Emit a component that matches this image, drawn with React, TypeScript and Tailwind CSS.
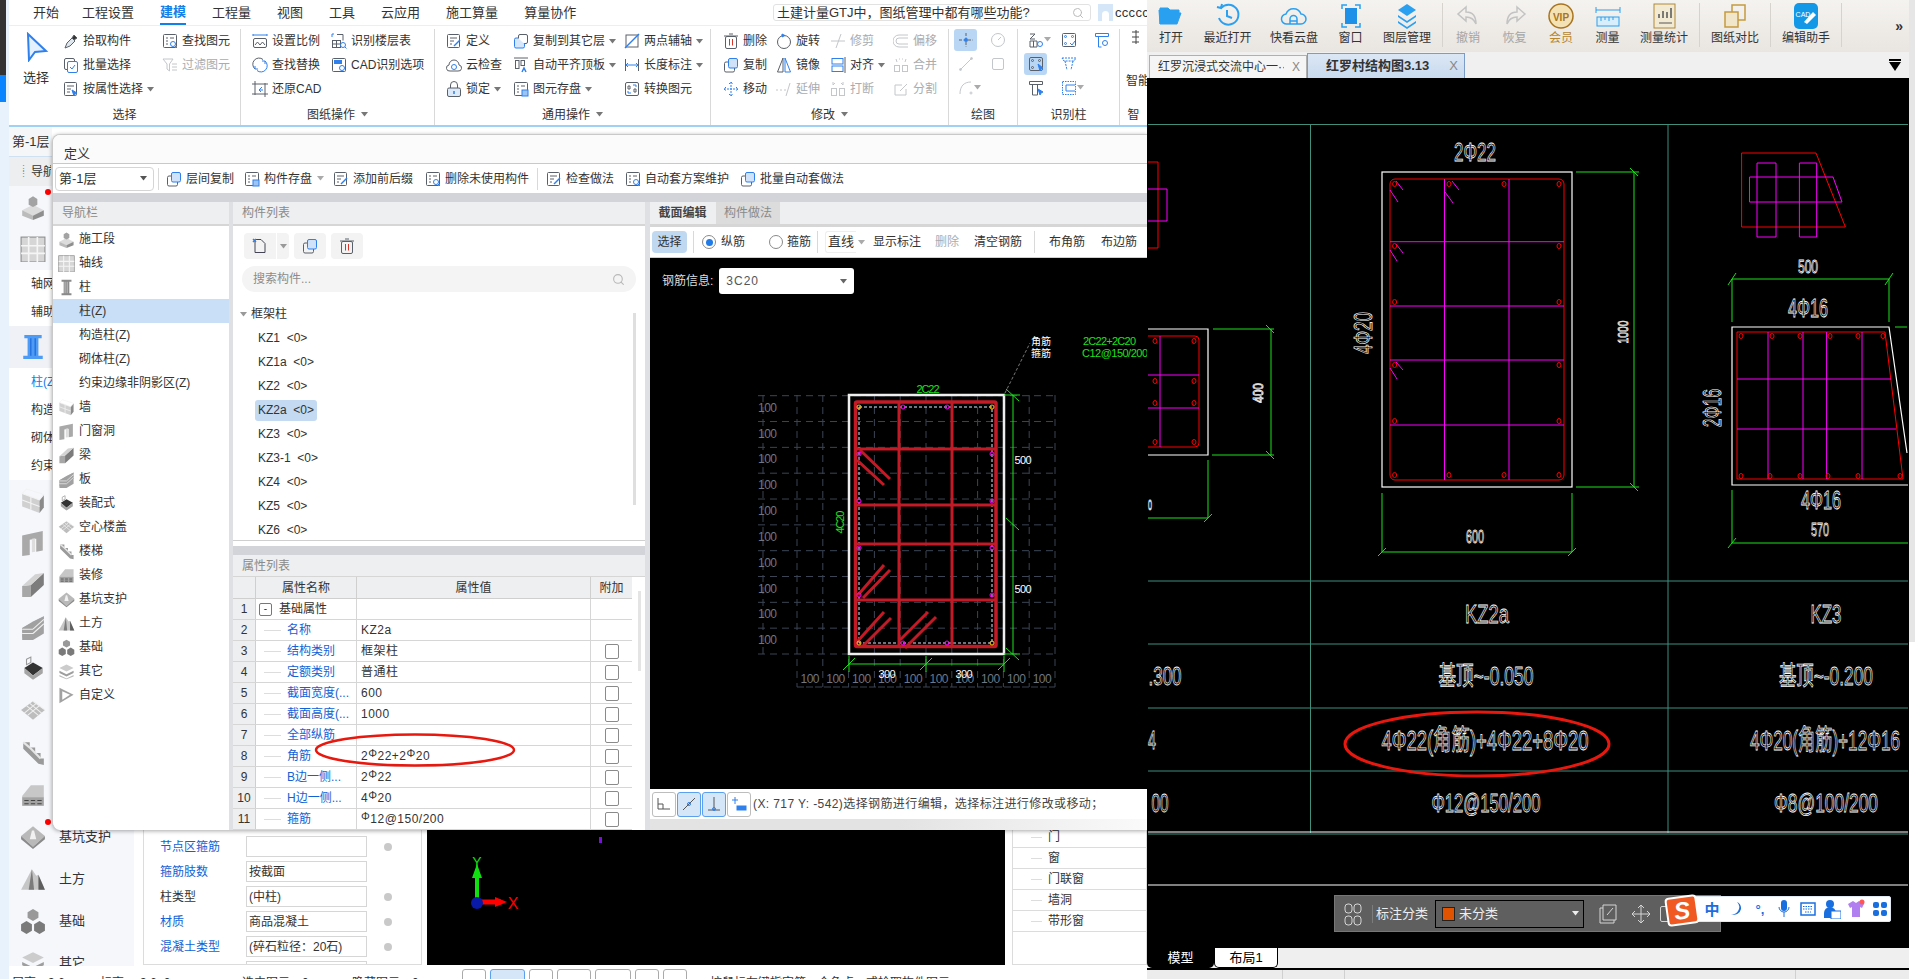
import type { ReactNode } from "react";
import { Search } from "lucide-react";

const BLUE = "#2f80ed";
const DK = "#5a6069";
const LT = "#c3c6ca";

const Ic = ({ c = DK, s = 16, children }: { c?: string; s?: number; children: ReactNode }) => (
  <svg width={s} height={s} viewBox="0 0 16 16" fill="none" stroke={c} strokeWidth={1} className="shrink-0">
    {children}
  </svg>
);

const Tri = ({ c = "#777" }: { c?: string }) => (
  <svg width="7" height="5" viewBox="0 0 7 5" className="shrink-0">
    <polygon points="0,0 7,0 3.5,4.5" fill={c} />
  </svg>
);

// ribbon icons
const ribbon: Record<string, ReactNode> = {
  pick: (
    <Ic>
      <path d="M2 15l2-5 5-5 3 3-5 5z" fill="#dfe6ee" />
      <path d="M9 5l2-3 3 3-3 2z" fill="#333" />
    </Ic>
  ),
  batch: (
    <Ic>
      <rect x="1.5" y="1.5" width="10" height="11" rx="1.5" />
      <rect x="4.5" y="4.5" width="10" height="11" rx="1.5" stroke={BLUE} fill="#fff" />
      <path d="M7 10l2 2 3-4" stroke={BLUE} />
    </Ic>
  ),
  attr: (
    <Ic>
      <rect x="1.5" y="1.5" width="12" height="13" rx="1" />
      <path d="M4 5h7M4 8h4M4 11h3" />
      <path d="M9 9l5 3-2 1-1 2z" fill={BLUE} stroke={BLUE} />
    </Ic>
  ),
  find: (
    <Ic>
      <rect x="1.5" y="1.5" width="13" height="13" rx="1" />
      <path d="M4 5h2M8 5h4M4 8h2M4 11h2" />
      <circle cx="11" cy="11" r="2.5" stroke={BLUE} />
      <path d="M13 13l2 2" stroke={BLUE} />
    </Ic>
  ),
  filter: (
    <Ic c={LT}>
      <path d="M1 2h10L7.5 7v7L5 12V7z" />
      <path d="M10 7h5M10 10h5M10 13h5" />
    </Ic>
  ),
  scale: (
    <Ic>
      <path d="M1 2h14M1 1v2M15 1v2" stroke={BLUE} />
      <rect x="1.5" y="5.5" width="13" height="9" rx="1.5" />
      <path d="M3 12l2.5-3 2.5 3 2.5-3 2.5 3" />
    </Ic>
  ),
  replace: (
    <Ic>
      <path d="M11 2.5A6 6 0 0 0 3 12" stroke={DK} />
      <path d="M5 13.5A6 6 0 0 0 13 4" stroke={BLUE} />
      <path d="M3 9v3h3M13 7V4h-3" stroke={BLUE} />
    </Ic>
  ),
  restore: (
    <Ic>
      <path d="M3 0v14M13 2v14M0 3h16M0 13h16" />
      <path d="M10 6L7 9h4M7 9l2 2" stroke={BLUE} />
    </Ic>
  ),
  floor: (
    <Ic>
      <path d="M1 1v3M1 1h2" stroke={BLUE} />
      <rect x="1.5" y="7.5" width="8" height="7" />
      <path d="M5.5 7.5v7M1.5 11h8M6 1.5h6v6" />
      <circle cx="12" cy="12" r="2.5" stroke={BLUE} />
      <path d="M14 14l1.500 1.500" stroke={BLUE} />
    </Ic>
  ),
  cadopt: (
    <Ic>
      <rect x="1.5" y="1.5" width="13" height="13" rx="1" />
      <rect x="3" y="3" width="8" height="4" fill={BLUE} stroke="none" />
      <circle cx="11" cy="11" r="2.5" stroke={BLUE} />
    </Ic>
  ),
  define: (
    <Ic>
      <rect x="1.5" y="1.5" width="12" height="13" rx="1" />
      <path d="M4 5h7M4 8h4M4 11h2" />
      <path d="M8 13l6-6" stroke={BLUE} strokeWidth={1.500} />
    </Ic>
  ),
  copyf: (
    <Ic>
      <rect x="5.500" y="1.500" width="9" height="9" rx="1.500" fill="#fff" />
      <path d="M5 5H3a1.500 1.500 0 0 0-1.500 1.500v7A1.500 1.500 0 0 0 3 15h7a1.500 1.500 0 0 0 1.500-1.500V11" stroke={BLUE} fill="#d7e7fb" />
    </Ic>
  ),
  cloud: (
    <Ic>
      <path d="M4 14a3 3 0 0 1-1-6 5 5 0 0 1 10 0 3 3 0 0 1-1 6z" />
      <circle cx="8" cy="10" r="2.500" stroke={BLUE} />
    </Ic>
  ),
  level: (
    <Ic>
      <path d="M1 1h14" />
      <rect x="2.500" y="3.500" width="3.500" height="8" />
      <rect x="8" y="3.500" width="3.500" height="5" />
      <path d="M9 15l2-4 2 4" stroke={BLUE} strokeWidth={1.500} />
    </Ic>
  ),
  lock: (
    <Ic>
      <rect x="1.500" y="7" width="13" height="8.500" rx="1.500" fill="#dbe9f9" stroke={DK} />
      <path d="M4.500 7V4a3.500 3.500 0 0 1 7 0v3" />
      <path d="M8 10v3" stroke={BLUE} strokeWidth={1.500} />
    </Ic>
  ),
  save: (
    <Ic>
      <rect x="1.500" y="1.500" width="13" height="13" rx="1" />
      <path d="M4 5h2M8 5h4M4 8h2M4 11h2" />
      <rect x="9" y="9" width="6" height="6" fill="#9cc4f4" stroke={BLUE} />
    </Ic>
  ),
  axis: (
    <Ic>
      <rect x="2" y="2" width="12" height="12" />
      <path d="M1 15L15 1" stroke={BLUE} strokeWidth={1.500} />
    </Ic>
  ),
  dim: (
    <Ic>
      <path d="M1.500 2v12M14.500 2v12" />
      <path d="M2 8h12M4 6L2 8l2 2M12 6l2 2-2 2" stroke={BLUE} />
    </Ic>
  ),
  conv: (
    <Ic>
      <rect x="1.500" y="1.500" width="13" height="13" rx="1.500" />
      <path d="M4 5h2v3H4zM10 8h2v3h-2z" />
      <path d="M9 4h3v2M7 12H4v-2" stroke={BLUE} />
    </Ic>
  ),
  del: (
    <Ic>
      <rect x="2.500" y="3.500" width="11" height="12" rx="1.500" />
      <path d="M1 3h14M6 1h4" />
      <path d="M6.500 6v6.500M9.500 6v6.500" stroke="#d8342c" />
    </Ic>
  ),
  dup: (
    <Ic>
      <path d="M5 5H3a1.500 1.500 0 0 0-1.500 1.500v7A1.500 1.500 0 0 0 3 15h7a1.500 1.500 0 0 0 1.500-1.500V11" />
      <rect x="5.500" y="1.500" width="9" height="9.500" rx="1.500" fill="#cfe2fa" stroke={BLUE} />
    </Ic>
  ),
  move: (
    <Ic c={BLUE}>
      <path d="M8 1v14M1 8h14M6 3l2-2 2 2M6 13l2 2 2-2M3 6L1 8l2 2M13 6l2 2-2 2" strokeDasharray="2 1" />
    </Ic>
  ),
  rot: (
    <Ic>
      <circle cx="8" cy="9" r="6.500" />
      <path d="M6 1l3 1.500-3 1.500z" fill={BLUE} stroke={BLUE} />
    </Ic>
  ),
  mir: (
    <Ic>
      <path d="M7 1L1.500 15H7z" />
      <path d="M9 1l5.500 14H9z" stroke={BLUE} />
    </Ic>
  ),
  trim: (
    <Ic c={LT}>
      <path d="M1 8h14M6 15l5-14" />
    </Ic>
  ),
  ext: (
    <Ic c={LT}>
      <path d="M0 9h2M4 9h2M8 9h2M10 15l4-13" />
    </Ic>
  ),
  offs: (
    <Ic c={LT}>
      <path d="M15 2H6a6 6 0 0 0 0 12h9M15 5H6a3 3 0 0 0 0 6h9" />
    </Ic>
  ),
  align: (
    <Ic c={BLUE}>
      <rect x="2" y="1.500" width="11" height="5.500" />
      <rect x="2" y="9" width="11" height="5.500" />
      <path d="M15 0v16" stroke={DK} />
    </Ic>
  ),
  brk: (
    <Ic c={LT}>
      <rect x="1.500" y="7.500" width="5" height="7" />
      <rect x="9.500" y="7.500" width="5" height="7" />
      <path d="M3 1v3M5 2L3 4M13 1v3M11 2l2 2" />
    </Ic>
  ),
  merge: (
    <Ic c={LT}>
      <rect x="1.500" y="8.500" width="5" height="6" />
      <rect x="9.500" y="8.500" width="5" height="6" />
      <path d="M3 2l1 3M13 2l-1 3M6 2h1M9 2h1" />
    </Ic>
  ),
  split: (
    <Ic c={LT}>
      <path d="M9 4H2v10h11V8" />
      <path d="M7 10l7-7" />
    </Ic>
  ),
};

const Item = ({ icon, text, off, arrow }: { icon: string; text: string; off?: boolean; arrow?: boolean }) => (
  <div className={`flex items-center h-[24px] gap-[4px] whitespace-nowrap ${off ? "text-[#a9acb0]" : "text-[#333]"}`}>
    {ribbon[icon]}
    <span>{text}</span>
    {arrow && <Tri />}
  </div>
);

const Group = ({ className, label, arrow, children }: { className: string; label?: string; arrow?: boolean; children: ReactNode }) => (
  <div className={`flex flex-col h-[96px] shrink-0 border-r border-[#d9d9d9] ${className}`}>
    <div className="flex h-[75px] overflow-hidden">{children}</div>
    <div className="flex items-center justify-center gap-[6px] h-[21px] text-[#333] whitespace-nowrap">
      {label}
      {arrow && <Tri />}
    </div>
  </div>
);

const Cell = ({ on, tri, children }: { on?: boolean; tri?: boolean; children: ReactNode }) => (
  <div className={`relative flex items-center justify-center w-[23px] h-[22px] rounded-[3px] mb-[2px] ${on ? "bg-[#b9d7f5]" : ""}`}>
    {children}
    {tri && (
      <span className="absolute left-[20px] top-[8px]">
        <Tri c="#aaa" />
      </span>
    )}
  </div>
);

const Ribbon = () => (
  <div className="flex h-[101px] pt-[3px] border-b-2 border-[#9fd0f5] text-[12px]">
    <Group className="w-[232px]" label="选择">
      <div className="w-[54px] pl-[14px] flex flex-col items-start shrink-0">
        <svg width="24" height="30" viewBox="0 0 24 30" className="ml-[2px] mt-[3px]">
          <path d="M3 2l18 17-11 1-6 8z" fill="#e3f0fd" stroke="#2f80ed" strokeWidth="2" />
        </svg>
        <span className="mt-[6px] text-[13px]">选择</span>
      </div>
      <div className="w-[99px] shrink-0">
        <Item icon="pick" text="拾取构件" />
        <Item icon="batch" text="批量选择" />
        <Item icon="attr" text="按属性选择" arrow />
      </div>
      <div>
        <Item icon="find" text="查找图元" />
        <Item icon="filter" text="过滤图元" off />
      </div>
    </Group>
    <Group className="w-[194px]" label="图纸操作" arrow>
      <div className="w-[79px] ml-[11px] shrink-0">
        <Item icon="scale" text="设置比例" />
        <Item icon="replace" text="查找替换" />
        <Item icon="restore" text="还原CAD" />
      </div>
      <div>
        <Item icon="floor" text="识别楼层表" />
        <Item icon="cadopt" text="CAD识别选项" />
      </div>
    </Group>
    <Group className="w-[276px]" label="通用操作" arrow>
      <div className="w-[67px] ml-[11px] shrink-0">
        <Item icon="define" text="定义" />
        <Item icon="cloud" text="云检查" />
        <Item icon="lock" text="锁定" arrow />
      </div>
      <div className="w-[111px] shrink-0">
        <Item icon="copyf" text="复制到其它层" arrow />
        <Item icon="level" text="自动平齐顶板" arrow />
        <Item icon="save" text="图元存盘" arrow />
      </div>
      <div>
        <Item icon="axis" text="两点辅轴" arrow />
        <Item icon="dim" text="长度标注" arrow />
        <Item icon="conv" text="转换图元" />
      </div>
    </Group>
    <Group className="w-[238px]" label="修改" arrow>
      <div className="w-[53px] ml-[12px] shrink-0">
        <Item icon="del" text="删除" />
        <Item icon="dup" text="复制" />
        <Item icon="move" text="移动" />
      </div>
      <div className="w-[54px] shrink-0">
        <Item icon="rot" text="旋转" />
        <Item icon="mir" text="镜像" />
        <Item icon="ext" text="延伸" off />
      </div>
      <div className="w-[63px] shrink-0">
        <Item icon="trim" text="修剪" off />
        <Item icon="align" text="对齐" arrow />
        <Item icon="brk" text="打断" off />
      </div>
      <div>
        <Item icon="offs" text="偏移" off />
        <Item icon="merge" text="合并" off />
        <Item icon="split" text="分割" off />
      </div>
    </Group>
    <Group className="w-[69px]" label="绘图">
      <div className="ml-[5px] mr-[9px] w-[23px]">
        <Cell on>
          <Ic c={DK}>
            <path d="M8 1v14M1 8h14" strokeDasharray="3 1.500" />
            <circle cx="8" cy="8" r="2" fill={BLUE} stroke="none" />
          </Ic>
        </Cell>
        <Cell>
          <Ic c={LT}>
            <path d="M2 14L14 2" />
            <circle cx="2.500" cy="13.500" r="1" />
            <circle cx="13.500" cy="2.500" r="1" />
          </Ic>
        </Cell>
        <Cell tri>
          <Ic c={LT}>
            <path d="M2 14C2 6 6 2 13 2" />
            <circle cx="13" cy="13" r="1" />
          </Ic>
        </Cell>
      </div>
      <div className="w-[23px]">
        <Cell>
          <Ic c={LT}>
            <circle cx="8" cy="8" r="6.500" />
            <path d="M8 8l3-3" />
          </Ic>
        </Cell>
        <Cell>
          <Ic c={LT}>
            <rect x="2.500" y="2.500" width="11" height="11" rx="1.500" />
          </Ic>
        </Cell>
      </div>
    </Group>
    <Group className="w-[102px]" label="识别柱">
      <div className="ml-[6px] mr-[10px] w-[23px]">
        <Cell tri>
          <Ic>
            <path d="M2 2h5M7 2L2 7h5M2 9h7v6H2zM5.500 9v6" />
            <circle cx="12" cy="12" r="2.500" stroke={BLUE} />
          </Ic>
        </Cell>
        <Cell on>
          <Ic>
            <rect x="1.500" y="1.500" width="13" height="13" rx="1.500" />
            <circle cx="4.500" cy="4.500" r="1" />
            <circle cx="11.500" cy="4.500" r="1" />
            <circle cx="4.500" cy="11.500" r="1" />
            <path d="M10 8l5 4-2 .5-1 2.500z" fill={BLUE} stroke={BLUE} />
          </Ic>
        </Cell>
        <Cell>
          <Ic>
            <path d="M1.500 1.500h13v3h-13zM4.500 5v10h5V5" />
            <path d="M10 9l5 3-2 1-1 2z" fill={BLUE} stroke={BLUE} />
          </Ic>
        </Cell>
      </div>
      <div className="mr-[10px] w-[23px]">
        <Cell>
          <Ic>
            <rect x="1.500" y="1.500" width="13" height="13" rx="1" />
            <circle cx="4.500" cy="4.500" r="1" stroke={BLUE} />
            <circle cx="11.500" cy="4.500" r="1" stroke={BLUE} />
            <circle cx="4.500" cy="11.500" r="1" stroke={BLUE} />
            <path d="M9 11l2 2 3-4" stroke={BLUE} />
          </Ic>
        </Cell>
        <Cell>
          <Ic c={BLUE}>
            <path d="M1 2h14l-2 3H3zM4 5l2 9M12 5l-2 9" strokeDasharray="2 1" />
          </Ic>
        </Cell>
        <Cell tri>
          <Ic c={BLUE}>
            <rect x="1.500" y="1.500" width="13" height="13" strokeDasharray="1.500 1" />
            <path d="M14 5H5v6h9" />
          </Ic>
        </Cell>
      </div>
      <div className="w-[23px]">
        <Cell>
          <Ic c={BLUE}>
            <path d="M1.500 1.500h13v3h-13zM4.500 5v10h3" />
            <circle cx="11" cy="11" r="2.500" />
          </Ic>
        </Cell>
      </div>
    </Group>
    <Group className="w-[27px] border-r-0" label="智">
      <div className="pl-[7px] flex flex-col text-[12px] whitespace-nowrap">
        <Ic c="#444">
          <path d="M9 1v14M5 3h7M5 8h7M5 13h7" />
        </Ic>
        <span className="mt-[27px] -ml-[1px]">智能</span>
      </div>
    </Group>
  </div>
);

// isometric gray block icons, nav panel and side rail share them
const iso: Record<string, ReactNode> = {
  block: (
    <>
      <path d="M12 10l10 5-10 6-10-6z" fill="#dcdcdc" />
      <path d="M2 15v5l10 4v-4z" fill="#bbb" />
      <path d="M22 15v5l-10 4v-4z" fill="#8f8f8f" />
      <path d="M12 2l4 2.500-4 2.500-4-2.500zM8 4.500V10l4 2V7zM16 4.500V10l-4 2V7z" fill="#a3a3a3" />
    </>
  ),
  grid: (
    <>
      <rect x="1" y="1" width="22" height="23" fill="#d6d6d6" stroke="#8d8d8d" />
      <path d="M8 1v23M16 1v23M1 9h22M1 16h22" stroke="#f5f5f5" strokeWidth="1.500" />
    </>
  ),
  column: (
    <>
      <path d="M5 1h14v3h-3v16h3v3H5v-3h3V4H5z" fill="#8a8a8a" />
      <path d="M10 4v16M13 4v16" stroke="#d5d5d5" />
    </>
  ),
  columnb: (
    <>
      <path d="M4 1h16v3h-3v16h4v3H3v-3h4V4H4z" fill="#4d9bf4" />
      <path d="M10 4v16M14 4v16" stroke="#1565d8" />
    </>
  ),
  wall: (
    <>
      <path d="M2 5l16 6v12L2 17z" fill="#d0d0d0" />
      <path d="M18 11l4-5v12l-4 5z" fill="#8a8a8a" />
      <path d="M2 5l4-4 16 5-4 5zM2 11l16 6M10 8v12" fill="none" stroke="#f3f3f3" />
    </>
  ),
  door: (
    <>
      <path d="M2 5l19-4v18l-6 1V8l-6 1v14l-7 1z" fill="#a9a9a9" />
      <path d="M11 8l3-.5V20l-3 .5z" fill="#ddd" />
    </>
  ),
  beam: (
    <>
      <path d="M2 13l8-1v11l-8 0z" fill="#a7a7a7" />
      <path d="M10 12L22 1v11L10 23z" fill="#7c7c7c" />
      <path d="M2 13L14 2l8-1-12 11z" fill="#d3d3d3" />
    </>
  ),
  slab: (
    <>
      <path d="M2 13l20-11v4L2 17zM2 18l20-11v4L2 22z" fill="#b3b3b3" />
      <path d="M2 13l10-6 10-5v16L12 24H2z" fill="#a1a1a1" />
      <path d="M2 14h10M2 18h10M12 14l10-9M12 18l10-9" stroke="#eee" />
    </>
  ),
  prefab: (
    <>
      <path d="M4 11l8-5 9 5-9 7z" fill="#333" />
      <path d="M4 11v5l8 6 9-6v-5l-9 7z" fill="#a5a5a5" />
      <path d="M6 3l4-2v5L6 8z" fill="none" stroke="#999" />
    </>
  ),
  hollow: (
    <>
      <path d="M12 3l11 8-11 9-11-9z" fill="#bdbdbd" />
      <path d="M6 7l11 9M9 5l11 9M12 3l11 8M18 7L7 16M15 5L4 14" stroke="#efefef" />
    </>
  ),
  stair: (
    <>
      <path d="M3 2h6v5h5v5h5v5h3v6l-5-1-14-14z" fill="#9a9a9a" />
      <path d="M3 2l6 5M9 7l5 5M14 12l5 5" stroke="#e5e5e5" strokeWidth="2" />
    </>
  ),
  finish: (
    <>
      <path d="M2 13L10 3h12v11H2z" fill="#c7c7c7" />
      <path d="M2 14h20v8H2z" fill="#a2a2a2" />
      <path d="M4 17h4M10 17h4M16 17h4M4 20h4M10 20h4M16 20h4" stroke="#444" />
    </>
  ),
  pit: (
    <>
      <path d="M12 2l11 9-11 10-11-10z" fill="#b9b9b9" />
      <path d="M1 11v3l11 9 11-9v-3l-11 10z" fill="#8b8b8b" />
      <path d="M11 6l-2 8h6l-2-8z" fill="#f1f1f1" />
    </>
  ),
  earth: (
    <>
      <path d="M1 22L11 3l4 6 2-1 6 14z" fill="#c6c6c6" />
      <path d="M11 3l2 19h-5z" fill="#7b7b7b" />
      <path d="M17 8l6 14h-6z" fill="#5e5e5e" />
    </>
  ),
  found: (
    <>
      <path d="M12 1l5 3v5l-5 3-5-3V4z" fill="#999" />
      <path d="M6 12l5 3v6l-5 3-5-3v-6zM18 12l5 3v6l-5 3-5-3v-6z" fill="#7a7a7a" />
    </>
  ),
  other: (
    <>
      <path d="M12 2l10 5-10 5L2 7z" fill="#ccc" />
      <path d="M2 11l10 5 10-5v3l-10 5-10-5z" fill="#9e9e9e" />
      <path d="M2 17l10 5 10-5v2l-10 4-10-4z" fill="#bbb" />
    </>
  ),
  custom: (
    <>
      <path d="M2 1l20 10L2 23z" fill="#a2a2a2" />
      <path d="M6 6l11 5-11 7z" fill="#fff" />
    </>
  ),
};

const Iso = ({ n, s }: { n: string; s: number }) => (
  <svg width={s} height={s} viewBox="0 0 24 24" className="shrink-0">
    {iso[n]}
  </svg>
);

const navRows: [string, string?][] = [
  ["施工段", "block"],
  ["轴线", "grid"],
  ["柱", "column"],
  ["柱(Z)"],
  ["构造柱(Z)"],
  ["砌体柱(Z)"],
  ["约束边缘非阴影区(Z)"],
  ["墙", "wall"],
  ["门窗洞", "door"],
  ["梁", "beam"],
  ["板", "slab"],
  ["装配式", "prefab"],
  ["空心楼盖", "hollow"],
  ["楼梯", "stair"],
  ["装修", "finish"],
  ["基坑支护", "pit"],
  ["土方", "earth"],
  ["基础", "found"],
  ["其它", "other"],
  ["自定义", "custom"],
];

const NavPanel = () => (
  <div className="flex flex-col w-[176px] shrink-0 bg-white rounded-bl-[8px]">
    <div className="flex items-center h-[22px] pl-[9px] bg-[#eeeff0] text-[#8a8a8a] border-b-2 border-[#d6d6d6] box-content">导航栏</div>
    <div className="pt-[1px]">
      {navRows.map(([t, ic]) => (
        <div key={t} className={`flex items-center h-[24px] pl-[3px] ${t === "柱(Z)" ? "bg-[#c8dff7]" : ""}`}>
          <span className="flex items-center justify-center w-[20px] h-[20px] mr-[3px]">{ic && <Iso n={ic} s={17} />}</span>
          <span>{t}</span>
        </div>
      ))}
    </div>
  </div>
);

const comps = ["KZ1", "KZ1a", "KZ2", "KZ2a", "KZ3", "KZ3-1", "KZ4", "KZ5", "KZ6"];

const ListPanel = () => (
  <div className="flex flex-col h-[339px] bg-white border-b border-[#cfcfcf] shrink-0">
    <div className="flex items-center h-[22px] pl-[9px] bg-[#eeeff0] text-[#8a8a8a] border-b-2 border-[#d6d6d6] box-content">构件列表</div>
    <div className="flex items-center gap-[5px] mt-[7px] ml-[11px] h-[26px]">
      <div className="flex items-center justify-center w-[32px] h-[26px] bg-[#f3f3f3] rounded-l-[4px]">
        <Ic c="#445">
          <path d="M3 1.500h6l4 4v9H3z" />
          <path d="M1 1l3 3M4 1L1 4" stroke={BLUE} strokeWidth={1.500} />
        </Ic>
      </div>
      <div className="flex items-center justify-center w-[12px] h-[26px] -ml-[4px] bg-[#f3f3f3] rounded-r-[4px]">
        <Tri c="#999" />
      </div>
      <div className="flex items-center justify-center w-[32px] h-[26px] bg-[#f3f3f3] rounded-[4px]">
        {ribbon.dup}
      </div>
      <div className="flex items-center justify-center w-[32px] h-[26px] bg-[#f3f3f3] rounded-[4px]">
        {ribbon.del}
      </div>
    </div>
    <div className="flex items-center justify-between mt-[7px] mx-[9px] h-[26px] px-[11px] rounded-[13px] bg-[#f4f4f4] text-[#8c8c8c]">
      <span>搜索构件...</span>
      <Search size={13} color="#b8b8b8" />
    </div>
    <div className="relative flex-1 overflow-hidden">
      <div className="flex items-center h-[24px] mt-[10px] pl-[7px] gap-[4px]">
        <Tri c="#999" />
        <span>框架柱</span>
      </div>
      {comps.map((c) => (
        <div key={c} className="flex items-center h-[24px] pl-[25px]">
          <span className={`flex items-center h-[21px] px-[3px] -ml-[3px] rounded-[3px] whitespace-pre ${c === "KZ2a" ? "bg-[#c3daf2]" : ""}`}>
            {c}  {"<0>"}
          </span>
        </div>
      ))}
      <div className="absolute right-[9px] top-[21px] w-[3px] h-[192px] bg-[#dfdfdf]" />
    </div>
  </div>
);

const Rebar = ({ v }: { v: string }) => (
  <span className="tracking-[0.5px]">
    {v.split("Φ").map((part, i) => (
      <span key={i}>
        {i > 0 && <span className="text-[11px] relative -top-[3px]">Φ</span>}
        {part}
      </span>
    ))}
  </span>
);

const propRows: [string, string, boolean][] = [
  ["基础属性", "", false],
  ["名称", "KZ2a", false],
  ["结构类别", "框架柱", true],
  ["定额类别", "普通柱", true],
  ["截面宽度(...", "600", true],
  ["截面高度(...", "1000", true],
  ["全部纵筋", "", true],
  ["角筋", "2Φ22+2Φ20", true],
  ["B边一侧...", "2Φ22", true],
  ["H边一侧...", "4Φ20", true],
  ["箍筋", "Φ12@150/200", true],
];

const PropPanel = () => (
  <div className="relative flex flex-col flex-1 min-h-0 bg-white">
    <div className="flex items-center h-[22px] pl-[9px] bg-[#eeeff0] text-[#8a8a8a] border-b border-[#d6d6d6] box-content">属性列表</div>
    <div className="flex">
      <div className="w-[399px]">
        <div className="flex h-[21px] bg-[#eeeff0] border-b border-[#cfcfcf] box-content">
          <div className="w-[23px] border-r border-[#cfcfcf]" />
          <div className="flex items-center justify-center w-[101px] border-r border-[#cfcfcf]">属性名称</div>
          <div className="flex items-center justify-center w-[234px] border-r border-[#cfcfcf]">属性值</div>
          <div className="flex items-center justify-center w-[41px]">附加</div>
        </div>
        {propRows.map(([n, v, chk], i) => (
          <div key={n} className="flex h-[21px] border-b border-[#d6d6d6]">
            <div className="flex items-center justify-center w-[23px] bg-[#eeeff0] border-r border-[#cfcfcf]">{i + 1}</div>
            <div className="flex items-center w-[101px] border-r border-[#d6d6d6] whitespace-nowrap overflow-hidden">
              {i === 0 ? (
                <>
                  <span className="flex items-center justify-center w-[13px] h-[13px] ml-[3px] mr-[7px] border border-[#777] rounded-[2px] text-[10px] leading-none">-</span>
                  <span>基础属性</span>
                </>
              ) : (
                <>
                  <span className="w-[17px] h-px ml-[8px] mr-[6px] bg-[#ddd] shrink-0" />
                  <span className="text-[#1262d6]">{n}</span>
                </>
              )}
            </div>
            <div className="flex items-center w-[234px] pl-[4px] border-r border-[#d6d6d6]">
              <Rebar v={v} />
            </div>
            <div className="flex items-center justify-center w-[41px]">
              {chk && <span className="w-[14px] h-[15px] border border-[#8a8a8a] rounded-[2px] bg-white" />}
            </div>
          </div>
        ))}
      </div>
      <div className="flex-1 pl-[6px] pt-[14px]">
        <div className="w-[3px] h-[80px] bg-[#e4e4e4]" />
      </div>
    </div>
    {/* hand drawn mark over the table */}
    <svg className="absolute left-[80px] top-[176px]" width="204" height="38" viewBox="0 0 204 38">
      <ellipse cx="102" cy="19" rx="99" ry="15.500" fill="none" stroke="#e8180f" strokeWidth="2.500" />
    </svg>
  </div>
);

const SecTool = ({ children, on }: { children: ReactNode; on?: boolean }) => (
  <div className={`flex items-center justify-center h-[22px] ${on ? "w-[35px] bg-[#c0d9f1] rounded-[4px]" : ""}`}>{children}</div>
);

const Radio = ({ on }: { on?: boolean }) => (
  <span className="flex items-center justify-center w-[14px] h-[14px] rounded-full border border-[#8a8a8a] bg-white">
    {on && <span className="w-[7px] h-[7px] rounded-full bg-[#1f7be8]" />}
  </span>
);

const hLines = Array.from({ length: 11 }, (_, i) => 395.7 + 25.83 * i);
const vLines = Array.from({ length: 11 }, (_, i) => 797 + 25.8 * i);
const stirY = [449, 505, 544, 600];
const dotY = [454, 501, 548, 595];

const SectionCanvas = () => (
  <svg width="497" height="531" viewBox="650 258 497 531" className="block">
    {hLines.map((y) => (
      <line key={y} x1="758" y1={y} x2="1055" y2={y} stroke="#3b4554" strokeDasharray="7 5" />
    ))}
    {vLines.map((x) => (
      <line key={x} x1={x} y1="395" x2={x} y2="687" stroke="#3b4554" strokeDasharray="7 5" />
    ))}
    <line x1="763" y1="395" x2="763" y2="654" stroke="#3b4554" strokeDasharray="7 5" />
    <line x1="797" y1="687" x2="1055" y2="687" stroke="#3b4554" strokeDasharray="7 2" />
    {hLines.slice(0, 10).map((y) => (
      <text key={y} x="758" y={y + 16} fontSize="12" fill="#6f7785" textLength="19" lengthAdjust="spacing">100</text>
    ))}
    {vLines.slice(0, 10).map((x) => (
      <text key={x} x={x + 3.5} y="683" fontSize="12" fill="#6f7785" textLength="19" lengthAdjust="spacing">100</text>
    ))}

    <rect x="849" y="395" width="155" height="259" fill="none" stroke="#eee" strokeWidth="2.500" />
    <rect x="859" y="407" width="133" height="236" fill="none" stroke="#dbe7ff" strokeDasharray="3 2" />
    <g stroke="#c41a26" strokeWidth="3.500" fill="none">
      <rect x="855.500" y="402" width="140.500" height="244.500" rx="1.500" />
      <line x1="899" y1="402" x2="899" y2="646" strokeWidth="3" />
      <line x1="952" y1="402" x2="952" y2="646" strokeWidth="3" />
      {stirY.map((y) => (
        <line key={y} x1="856" y1={y} x2="995" y2={y} strokeWidth="3" />
      ))}
      <path d="M860 450l30 29M857 460l27 25M858 595l26-30M863 598l27-28M856 643l28-31M863 646l28-28M900 640l28-28M905 648l31-31" strokeWidth="3" />
    </g>
    {[859, 903, 947, 992].flatMap((x) => [407, 643].map((y) => <circle key={`${x}-${y}`} cx={x} cy={y} r="2" fill="none" stroke={x === 859 || x === 992 ? "#f5c518" : "#f0f"} />))}
    {[859, 992].flatMap((x) => dotY.map((y) => <circle key={`${x}-${y}`} cx={x} cy={y} r="2" fill="none" stroke="#f0f" />))}

    <g stroke="#1fe01f" fill="none">
      <path d="M1004 395h16M1013 395v259M1004 654h16" />
      <path d="M1006 389l13 12M1006 518l13 12M1006 648l13 12" />
      <path d="M849 664h155M849 656v16M926 656v16M1004 656v16" />
      <path d="M843 670l12-12M920 670l12-12M998 670l12-12" />
    </g>
    <text x="1023" y="460" fontSize="11" fill="#fff" textAnchor="middle" dominantBaseline="central" textLength="17">500</text>
    <text x="1023" y="589" fontSize="11" fill="#fff" textAnchor="middle" dominantBaseline="central" textLength="17">500</text>
    <text x="887" y="674" fontSize="11" fill="#fff" textAnchor="middle" dominantBaseline="central" textLength="17">300</text>
    <text x="964" y="674" fontSize="11" fill="#fff" textAnchor="middle" dominantBaseline="central" textLength="17">300</text>
    <text x="928" y="389" fontSize="11" fill="#1fe01f" textAnchor="middle" dominantBaseline="central" textLength="23">2C22</text>
    <text x="840" y="522" fontSize="11" fill="#1fe01f" textAnchor="middle" dominantBaseline="central" textLength="23" transform="rotate(-90 840 522)">4C20</text>
    <line x1="1005" y1="393" x2="1030" y2="343" stroke="#777" strokeDasharray="3 2" />
    <text x="1041" y="341" fontSize="10" fill="#fff" textAnchor="middle" dominantBaseline="central">角筋</text>
    <text x="1041" y="353" fontSize="10" fill="#fff" textAnchor="middle" dominantBaseline="central">箍筋</text>
    <text x="1083" y="341" fontSize="11" fill="#1fe01f" dominantBaseline="central" textLength="53">2C22+2C20</text>
    <text x="1082" y="353" fontSize="11" fill="#1fe01f" dominantBaseline="central" textLength="66">C12@150/200</text>
  </svg>
);

const StatBtn = ({ on, children }: { on?: boolean; children: ReactNode }) => (
  <div className={`flex items-center justify-center w-[24px] h-[25px] rounded-[3px] border ${on ? "bg-[#d6e6f9] border-[#5aa0ee]" : "bg-white border-[#bdbdbd]"}`}>{children}</div>
);

const SectionPanel = () => (
  <div className="flex flex-col flex-1 min-w-0 bg-white">
    <div className="flex h-[22px] bg-[#eeeff0] box-content border-b-[3px] border-[#d6d6d6]">
      <div className="flex items-center justify-center w-[65px] font-bold text-[#444]">截面编辑</div>
      <div className="flex items-center justify-center w-[64px] ml-px bg-[#dcdcdc] text-[#8a8a8a]">构件做法</div>
    </div>
    <div className="flex items-center h-[31px] pl-[2px] border-b border-[#cfcfcf]">
      <SecTool on>选择</SecTool>
      <span className="w-px h-[22px] ml-[6px] mr-[8px] bg-[#d9d9d9]" />
      <Radio on />
      <span className="ml-[5px] w-[48px]">纵筋</span>
      <Radio />
      <span className="ml-[4px] w-[30px]">箍筋</span>
      <span className="w-px h-[22px] mr-[7px] bg-[#d9d9d9]" />
      <span className="flex items-center h-[22px] w-[31px] pl-[2px] rounded-l-[3px] border border-r-0 border-[#eee] text-[13px]">直线</span>
      <span className="ml-[2px]"><Tri c="#aaa" /></span>
      <span className="ml-[8px]">显示标注</span>
      <span className="ml-[14px] text-[#a9acb0]">删除</span>
      <span className="ml-[15px]">清空钢筋</span>
      <span className="w-px h-[22px] ml-[12px] mr-[14px] bg-[#d9d9d9]" />
      <span>布角筋</span>
      <span className="ml-[16px]">布边筋</span>
    </div>
    <div className="relative flex-1 bg-black overflow-hidden">
      <SectionCanvas />
      <div className="absolute left-[12px] top-[10px] flex items-center gap-[6px] text-[#ddd]">
        <span>钢筋信息:</span>
        <div className="flex items-center justify-between w-[135px] h-[26px] px-[7px] rounded-[3px] bg-white text-[#555] tracking-[1px]">
          3C20
          <Tri c="#666" />
        </div>
      </div>
    </div>
    <div className="flex items-center h-[30px] pl-[2px] gap-px bg-white text-[#444] whitespace-nowrap">
      <StatBtn>
        <Ic c="#555"><path d="M2 2v11h12M2 8h5v5" /></Ic>
      </StatBtn>
      <StatBtn on>
        <Ic c="#555"><path d="M2 14L14 2" /><circle cx="8" cy="8" r="1.500" stroke={BLUE} /></Ic>
      </StatBtn>
      <StatBtn on>
        <Ic c="#555"><path d="M8 1v13M2 14h12" /><circle cx="8" cy="13" r="1.500" stroke={BLUE} /></Ic>
      </StatBtn>
      <StatBtn>
        <Ic c={BLUE}><path d="M4 1v7M1 4h6" /><rect x="6" y="10" width="9" height="4" fill={BLUE} /></Ic>
      </StatBtn>
      <span className="ml-[1px] tracking-[0.4px]">(X: 717 Y: -542)选择钢筋进行编辑，选择标注进行修改或移动；</span>
    </div>
    <div className="h-[11px] bg-gradient-to-r from-[#e3e3e3] via-[#e3e3e3] to-[#fafafa]" />
  </div>
);

const dlgTools: [string, string, string][] = [
  ["dup", "层间复制", "ml-[7px]"],
  ["save", "构件存盘", "ml-[10px]"],
  ["define", "添加前后缀", "ml-[9px]"],
  ["find", "删除未使用构件", "ml-[12px]"],
  ["define", "检查做法", "ml-[8px]"],
  ["find", "自动套方案维护", "ml-[11px]"],
  ["dup", "批量自动套做法", "ml-[11px]"],
];

const DefineDialog = () => (
  <div className="absolute left-[52px] top-[134px] flex flex-col w-[1095px] h-[696px] bg-white rounded-l-[8px] rounded-tr-none border-l border-t border-[#c9c9c9] shadow-[0_1px_4px_rgba(0,0,0,0.35)] text-[12px] text-[#333] overflow-hidden">
    <div className="flex items-end h-[29px] pl-[11px] bg-[#fbfbfb] border-b border-[#c9c9c9] text-[13px] shrink-0">定义</div>
    <div className="flex items-center h-[29px] bg-white shrink-0">
      <div className="flex items-center justify-between w-[99px] h-[24px] ml-[2px] px-[3px] pr-[6px] rounded-[4px] border border-[#d5d5d5] text-[13px]">
        第-1层
        <Tri c="#555" />
      </div>
      <span className="w-px h-[22px] ml-[4px] bg-[#d9d9d9]" />
      {dlgTools.map(([ic, t, m]) => (
        <div key={t} className={`flex items-center whitespace-nowrap ${m}`}>
          {t === "检查做法" && <span className="w-px h-[22px] mr-[8px] bg-[#d9d9d9]" />}
          <span className="mr-[4px]">{ribbon[ic]}</span>
          <span>{t}</span>
          {t === "构件存盘" && <span className="ml-[5px]"><Tri c="#aaa" /></span>}
        </div>
      ))}
    </div>
    <div className="h-[9px] bg-[#d2d4da] shrink-0" />
    <div className="flex flex-1 min-h-0">
      <NavPanel />
      <div className="w-[4px] bg-[#dfe0e3] shrink-0" />
      <div className="flex flex-col w-[412px] shrink-0">
        <ListPanel />
        <div className="h-[5px] bg-white shrink-0" />
        <div className="h-[9px] bg-[#d2d4da] shrink-0" />
        <PropPanel />
      </div>
      <div className="w-[5px] bg-[#dfe0e3] shrink-0" />
      <SectionPanel />
    </div>
  </div>
);

const railBottom: [string, string?][] = [
  ["wall"],
  ["door"],
  ["beam"],
  ["slab"],
  ["prefab"],
  ["hollow"],
  ["stair"],
  ["finish"],
  ["pit", "基坑支护"],
  ["earth", "土方"],
  ["found", "基础"],
  ["other", "其它"],
];

const RailItem = ({ ic, t, dot, active }: { ic: string; t?: string; dot?: boolean; active?: boolean }) => (
  <div className={`relative flex items-center shrink-0 h-[42px] pl-[11px] gap-[13px] ${active ? "bg-[#f0f1f6]" : ""}`}>
    <Iso n={ic} s={26} />
    {t && <span className="text-[13px] whitespace-nowrap">{t}</span>}
    {dot && <span className="absolute left-[36px] top-[3px] w-[6px] h-[6px] rounded-full bg-[#f00]" />}
  </div>
);

const RailSub = ({ t, blue }: { t: string; blue?: boolean }) => (
  <div className={`flex items-center h-[28px] w-[43px] pl-[22px] overflow-hidden whitespace-nowrap ${blue ? "text-[#1280e8]" : ""}`}>{t}</div>
);

const Rail = () => (
  <div className="flex flex-col w-[125px] h-[809px] shrink-0 bg-[#f5f7fb] text-[#333] overflow-hidden">
    <div className="flex items-center h-[29px] pl-[10px] gap-[7px] bg-[#eceef0] shrink-0">
      <span className="text-[#888] tracking-[1px] text-[9px] leading-[5px] w-[5px] break-all">⋮ ⋮</span>
      <span className="w-[20px] overflow-hidden whitespace-nowrap">导航栏</span>
    </div>
    <RailItem ic="block" dot />
    <RailItem ic="grid" />
    <div className="bg-white text-[12px] shrink-0">
      <RailSub t="轴网" />
      <RailSub t="辅助轴线" />
    </div>
    <RailItem ic="columnb" active />
    <div className="bg-white text-[12px] shrink-0">
      <RailSub t="柱(Z)" blue />
      <RailSub t="构造柱" />
      <RailSub t="砌体柱" />
      <RailSub t="约束边缘" />
    </div>
    {railBottom.map(([i, t]) => <RailItem key={i} ic={i} t={t} dot={i === "pit"} />)}
  </div>
);

const Prop = ({ n, v, blue, dot = true }: { n: string; v: string; blue?: boolean; dot?: boolean }) => (
  <div className="flex items-center h-[25px] shrink-0">
    <span className={`w-[86px] shrink-0 whitespace-nowrap ${blue ? "text-[#1262d6]" : "text-[#333]"}`}>{n}</span>
    <span className="flex items-center w-[121px] h-[21px] pl-[2px] border border-[#d6d6d6] whitespace-nowrap text-[#333]">{v}</span>
    {dot && <span className="ml-[17px] w-[8px] h-[8px] rounded-full bg-[#c9c9c9]" />}
  </div>
);

const treeRows = ["门", "窗", "门联窗", "墙洞", "带形窗"];
const statWidth = ["w-[24px]", "w-[35px]", "w-[24px]", "w-[34px]", "w-[36px]", "w-[24px]", "w-[24px]"];

const LeftApp = () => (
  <div className="absolute left-0 top-0 flex w-[1147px] h-[979px] bg-white text-[12px] text-[#333] overflow-hidden">
    <div className="flex flex-col w-[9px] shrink-0 bg-[#e8f2fc]">
      <div className="h-[75px] w-[6px] bg-[#333]" />
      <div className="h-[27px] w-[6px] bg-[#0a84ff]" />
    </div>
    <div className="flex flex-col flex-1 min-w-0">
      <div className="flex items-center justify-between h-[26px] border-b border-[#eee] shrink-0">
        <div className="flex text-[13px] gap-[26px] pl-[24px]">
          {["开始", "工程设置", "建模", "工程量", "视图", "工具", "云应用", "施工算量", "算量协作"].map((t) => (
            <span key={t} className={`flex items-center h-[25px] ${t === "建模" ? "text-[#1280e8] font-bold border-b-2 border-[#1280e8] box-border" : ""} ${t === "工程设置" ? "-ml-[3px]" : ""}`}>{t}</span>
          ))}
        </div>
        <div className="flex items-center">
          <div className="flex items-center justify-between w-[318px] h-[17px] pl-[3px] pr-[6px] border border-[#e2e2e2] rounded-[3px] text-[13px]">
            土建计量GTJ中，图纸管理中都有哪些功能?
            <Search size={12} color="#bbb" />
          </div>
          <span className="flex items-end justify-center w-[15px] h-[17px] ml-[7px] bg-[#d4e6f8]">
            <span className="w-[7px] h-[10px] rounded-t-full bg-white" />
          </span>
          <span className="ml-[2px] w-[32px] overflow-hidden text-[13px] tracking-[0.3px]">ccccc</span>
        </div>
      </div>
      <Ribbon />
      <div className="flex h-[30px] shrink-0 bg-white border-b border-[#cfe0f2]">
        <span className="flex items-center pl-[3px] w-[43px] text-[13px] bg-[#f4f6f8]">第-1层</span>
      </div>
      <div className="flex flex-1 min-h-0">
        <Rail />
        <div className="w-[4px] mx-[2px] mt-[670px] mb-[270px] bg-[#dedede] rounded-sm shrink-0" />
        <div className="flex flex-col w-[279px] shrink-0 mx-[1px] pt-[676px] pl-[16px] border border-[#dcdcdc] h-[808px] overflow-hidden">
          <Prop n="节点区箍筋" v="" blue />
          <Prop n="箍筋肢数" v="按截面" blue dot={false} />
          <Prop n="柱类型" v="(中柱)" />
          <Prop n="材质" v="商品混凝土" blue />
          <Prop n="混凝土类型" v="(碎石粒径：20石)" blue />
          <Prop n="" v="" />
        </div>
        <div className="relative w-[578px] h-[808px] ml-[4px] shrink-0 bg-black">
          <svg className="absolute left-[30px] top-[699px]" width="100" height="70" viewBox="0 0 100 70">
            <path d="M20 46V20" stroke="#10e010" strokeWidth="4" />
            <polygon points="20,8 15,22 25,22" fill="#10e010" />
            <path d="M20 46h24" stroke="#f00" strokeWidth="5" />
            <polygon points="50,46 38,41 38,51" fill="#f00" />
            <circle cx="20" cy="47" r="6" fill="#0a1aa8" />
            <text x="20" y="6" fontSize="14" fill="#10e010" textAnchor="middle" dominantBaseline="central">Y</text>
            <text x="56" y="47" fontSize="16" fill="#f00" textAnchor="middle" dominantBaseline="central">X</text>
          </svg>
          <span className="absolute left-[172px] top-[680px] w-[3px] h-[6px] bg-[#7b0fe0]" />
        </div>
        <div className="flex flex-col w-[135px] ml-[7px] shrink-0 h-[808px] pt-[669px] border border-[#dcdcdc]">
          {treeRows.map((t) => (
            <div key={t} className="flex items-center h-[21px] shrink-0 border-b border-[#dcdcdc] pl-[18px] gap-[6px]">
              <span className="w-[11px] h-px bg-[#ddd]" />
              {t}
            </div>
          ))}
        </div>
      </div>
      <div className="flex items-start h-[13px] shrink-0 pl-[3px] pt-[8px] overflow-hidden whitespace-nowrap">
        <span className="w-[88px]">层高：3.6m</span>
        <span className="w-[142px]">标高：-3.6~0</span>
        <span className="w-[110px]">选中图元：0</span>
        <span className="w-[110px]">隐藏图元：0</span>
        <div className="flex gap-[4px] items-start -mt-[5px]">
          {statWidth.map((w, i) => (
            <span key={i} className={`h-[20px] rounded-t-[3px] border ${w} ${i === 1 ? "bg-[#d6e6f9] border-[#5aa0ee]" : "border-[#aaa]"}`} />
          ))}
        </div>
        <span className="ml-[23px]">按鼠标左键指定第一个角点，或拾取构件图元</span>
      </div>
    </div>
    <DefineDialog />
  </div>
);

// CAD text is thin and narrow, so it is drawn hollow with a squeezed width
const Cad = ({ x, y, w, fs, t, rot }: { x: number; y: number; w: number; fs: number; t: string; rot?: boolean }) => (
  <text
    x={x}
    y={y}
    fontSize={fs}
    textAnchor="middle"
    dominantBaseline="central"
    textLength={w}
    lengthAdjust="spacingAndGlyphs"
    fill="none"
    stroke="#fff"
    strokeWidth="0.8"
    transform={rot ? `rotate(-90 ${x} ${y})` : undefined}
  >
    {t}
  </text>
);

const Rd = ({ pts }: { pts: [number, number][] }) => (
  <>
    {pts.map(([x, y]) => (
      <ellipse key={`${x}-${y}`} cx={x} cy={y} rx="2" ry="2.500" fill="none" stroke="#f00" />
    ))}
  </>
);

const CadSheet = () => {
  const teal = "#3f8f7c";
  const mid: [number, number][] = [1394.6, 1449, 1504, 1559].flatMap((x) => [184, 475].map((y): [number, number] => [x, y]));
  const side: [number, number][] = [1394.6, 1559].flatMap((x) => [246, 302, 365, 421].map((y): [number, number] => [x, y]));
  const leftDots: [number, number][] = [1155, 1194].flatMap((x) => [341, 381, 403, 442].map((y): [number, number] => [x, y]));
  const rightTop: [number, number][] = [1741, 1772, 1800, 1830, 1858, 1883].map((x): [number, number] => [x, 336]);
  const rightBot: [number, number][] = [1741, 1770, 1800, 1828, 1858, 1900].map((x): [number, number] => [x, 476]);
  return (
    <svg width="762" height="870" viewBox="1147 78 762 870" className="block">
      <g stroke={teal} fill="none">
        {[124.5, 581, 644, 708, 771, 834].map((y) => (
          <line key={y} x1="1148" y1={y} x2="1908" y2={y} />
        ))}
        <line x1="1310.500" y1="124" x2="1310.500" y2="833" />
        <line x1="1668" y1="124" x2="1668" y2="833" />
      </g>
      <line x1="1148" y1="832" x2="1908" y2="832" stroke="#fff" />
      <line x1="1148" y1="885" x2="1908" y2="885" stroke="#fff" />

      {/* top left partial column */}
      <path d="M1148 162h10v86h-10" fill="none" stroke="#f00" />
      <path d="M1148 189h19v32h-19" fill="none" stroke="#f0f" />

      {/* left partial column */}
      <path d="M1148 329h60v126h-60" fill="none" stroke="#fff" strokeWidth="1.200" />
      <path d="M1148 336h47a4 4 0 0 1 4 4v103a4 4 0 0 1-4 4h-47" fill="none" stroke="#f00" />
      <path d="M1160 336v111M1148 375h51M1148 408h51" stroke="#f0f" />
      <Rd pts={leftDots} />
      <g stroke="#1fe01f" fill="none">
        <path d="M1213 329h61M1271 329v126M1212 455h62M1266 325l8 8M1266 451l8 8" />
        <path d="M1208 460v58M1148 518h60M1204 522l8-8" />
      </g>
      <Cad x={1258} y={393} w={20} fs={14} t="400" rot />
      <Cad x={1150} y={505} w={4} fs={14} t="0" />

      {/* KZ2a */}
      <rect x="1382" y="172" width="190" height="315" fill="none" stroke="#fff" strokeWidth="1.200" />
      <rect x="1390" y="179" width="174" height="301" rx="5" fill="none" stroke="#f00" />
      <path d="M1444.500 179v301M1509 179v301M1390 241.700h174M1390 306h174M1390 360h174M1390 425h174" stroke="#f0f" />
      <path d="M1396 181l7 9M1390 190l8 12M1452 181l7 9M1445 192l8 11M1396 244l7 9M1390 250l7 11M1396 362l7 8M1390 368l7 11" stroke="#f0f" fill="none" />
      <Rd pts={mid} />
      <Rd pts={side} />
      <g stroke="#1fe01f" fill="none">
        <path d="M1576 172h63M1634 172v315M1576 487h63M1630 168l8 8M1630 483l8 8" />
        <path d="M1382 493v59M1572 493v59M1382 552h190M1378 556l8-8M1568 556l8-8" />
      </g>
      <Cad x={1475} y={152} w={42} fs={26} t="2Φ22" />
      <Cad x={1363} y={333} w={42} fs={26} t="4Φ20" rot />
      <Cad x={1622} y={332} w={23} fs={15} t="1000" rot />
      <Cad x={1475} y={537} w={18} fs={18} t="600" />

      {/* right top section */}
      <path d="M1741.600 153H1816L1845.400 227H1741.600Z" fill="none" stroke="#f00" />
      <path d="M1757 163h19v74h-19zM1799.400 163h17.300v74h-17.300zM1749.500 177H1833L1842 202H1749.500Z" fill="none" stroke="#f0f" />
      <g stroke="#1fe01f" fill="none">
        <path d="M1732 279h157M1732 279v43M1889 279v43M1728 285l8-12M1885 285l8-12" />
        <path d="M1895 327h12M1732 490v53M1732 543h176M1728 548l8-10" />
      </g>
      <Cad x={1808} y={267} w={20} fs={18} t="500" />
      <Cad x={1808} y={308} w={40} fs={25} t="4Φ16" />

      {/* KZ3 */}
      <path d="M1908 485H1732V327H1889L1907 453" fill="none" stroke="#fff" strokeWidth="1.200" />
      <path d="M1737 332H1885L1903 479H1737Z" fill="none" stroke="#f00" />
      <path d="M1768 332v147M1803 332v147M1826.600 332v147M1862 332v147M1737 379H1891M1737 429H1896" stroke="#f0f" />
      <Rd pts={rightTop} />
      <Rd pts={rightBot} />
      <Cad x={1712} y={408} w={38} fs={26} t="2Φ16" rot />
      <Cad x={1821} y={500} w={40} fs={25} t="4Φ16" />
      <Cad x={1820} y={530} w={18} fs={18} t="570" />

      {/* table text */}
      <Cad x={1487} y={614} w={44} fs={26} t="KZ2a" />
      <Cad x={1826} y={614} w={31} fs={26} t="KZ3" />
      <Cad x={1486} y={676} w={95} fs={26} t="基顶~-0.050" />
      <Cad x={1826} y={676} w={94} fs={26} t="基顶~-0.200" />
      <Cad x={1165} y={676} w={33} fs={26} t=".300" />
      <Cad x={1485} y={740} w={207} fs={28} t="4Φ22(角筋)+4Φ22+8Φ20" />
      <Cad x={1825} y={740} w={150} fs={28} t="4Φ20(角筋)+12Φ16" />
      <Cad x={1152} y={740} w={8} fs={26} t="4" />
      <Cad x={1486} y={803} w={109} fs={26} t="Φ12@150/200" />
      <Cad x={1826} y={803} w={104} fs={26} t="Φ8@100/200" />
      <Cad x={1160} y={803} w={17} fs={26} t="00" />

      <ellipse cx="1477" cy="744" rx="132" ry="32" fill="none" stroke="#e8180f" strokeWidth="3" />
    </svg>
  );
};

const cadTools: [string, string, ReactNode][] = [
  ["打开", "#333", <path key="a" d="M2 8h10l3 3h9l-4 11H3z M3 22V6h8l2 2h9v3" fill="#2aa0f0" stroke="#2aa0f0" />],
  ["最近打开", "#333", <g key="a" fill="none" stroke="#2aa0f0" strokeWidth="2"><path d="M7 6a10 10 0 1 1-2 10" /><path d="M13 8v6l5 2M3 5l4 1 1-4" /></g>],
  ["快看云盘", "#333", <g key="a" fill="none" stroke="#2aa0f0" strokeWidth="1.500"><path d="M7 22a5 5 0 0 1-1-10 8 8 0 0 1 15 0 5 5 0 0 1 0 10z" /><path d="M10 22v-5a3 3 0 0 1 7 0v5M10 19h7" /></g>],
  ["窗口", "#333", <g key="a"><rect x="8" y="6" width="12" height="16" fill="#1e90e8" /><path d="M5 7V3h5M18 3h5v4M5 21v4h5M18 25h5v-4" fill="none" stroke="#2aa0f0" strokeWidth="1.500" /></g>],
  ["图层管理", "#333", <g key="a" fill="#2aa0f0"><path d="M14 2l9 6-9 6-9-6z" /><path d="M5 13l9 6 9-6v2l-9 6-9-6z" /><path d="M5 19l9 6 9-6v2l-9 6-9-6z" /></g>],
];
const cadTools2: [string, string, ReactNode][] = [
  ["撤销", "#a5a5a5", <path key="a" d="M12 5L4 12l8 7v-4c5 0 8 2 10 7 0-8-4-12-10-12z" fill="none" stroke="#c3c3c3" strokeWidth="1.500" />],
  ["恢复", "#a5a5a5", <path key="a" d="M16 5l8 7-8 7v-4c-5 0-8 2-10 7 0-8 4-12 10-12z" fill="none" stroke="#c3c3c3" strokeWidth="1.500" />],
  ["会员", "#b8862d", <g key="a"><circle cx="14" cy="14" r="12" fill="#f4e2b4" stroke="#a8741f" strokeWidth="1.500" /><text x="14" y="15" fontSize="10" fontWeight="700" fill="#a8741f" textAnchor="middle" dominantBaseline="central">VIP</text></g>],
  ["测量", "#333", <g key="a" fill="none" stroke="#2aa0f0"><path d="M2 8h24M2 5v6M26 5v6" /><rect x="3" y="15" width="22" height="9" fill="#d8eefc" /><path d="M7 15v4M11 15v3M15 15v4M19 15v3" /></g>],
  ["测量统计", "#333", <g key="a"><rect x="4" y="2" width="21" height="24" fill="#f3ead3" stroke="#b08a3a" /><path d="M9 16v-4M13 16V9M17 16v-6M21 16V6" stroke="#555" strokeWidth="1.500" /><path d="M9 21h13" stroke="#555" /></g>],
];

const CadTool = ({ label, color, icon }: { label: string; color: string; icon: ReactNode }) => (
  <div className="flex flex-col items-center shrink-0">
    <svg width="28" height="28" viewBox="0 0 28 28" className="-mb-[1px]">{icon}</svg>
    <span style={{ color }}>{label}</span>
  </div>
);

const CadSep = () => <span className="w-px h-[44px] -mx-[7.5px] bg-[#d6d2cd] shrink-0" />;

const ImeCell = ({ children }: { children: ReactNode }) => (
  <span className="flex items-center justify-center w-[24px] shrink-0">{children}</span>
);

const ImeBar = () => (
  <div className="absolute left-[537px] top-[818px] flex items-center h-[26px] w-[207px] pl-[15px] bg-white border border-[#dfe8f3] rounded-r-[2px]">
    <ImeCell><span className="text-[15px] font-bold text-[#1a6fe0] leading-none">中</span></ImeCell>
    <ImeCell><svg width="14" height="16" viewBox="0 0 14 16"><path d="M8 1a7 7 0 0 1-6 12 7 7 0 0 0 10-5 7 7 0 0 0-4-7z" fill="#1a6fe0" /></svg></ImeCell>
    <ImeCell><span className="text-[13px] font-bold text-[#1a6fe0] leading-none">°,</span></ImeCell>
    <ImeCell><svg width="12" height="20" viewBox="0 0 12 20"><rect x="3" y="1" width="6" height="11" rx="3" fill="#1a6fe0" /><path d="M1 8a5 5 0 0 0 10 0M6 13v5" stroke="#1a6fe0" fill="none" /></svg></ImeCell>
    <ImeCell><svg width="16" height="14" viewBox="0 0 16 14"><rect x="1" y="1" width="14" height="12" fill="none" stroke="#1a6fe0" strokeWidth="1.500" /><path d="M3 4.500h10M3 7h10M5 10h6" stroke="#1a6fe0" strokeDasharray="1.500 1" /></svg></ImeCell>
    <ImeCell><svg width="18" height="20" viewBox="0 0 18 20"><circle cx="7" cy="5" r="4" fill="#1a6fe0" /><path d="M1 19v-5a6 6 0 0 1 12 0v5z" fill="#1a6fe0" /><rect x="8" y="12" width="10" height="8" fill="#fff" stroke="#1a6fe0" /></svg></ImeCell>
    <ImeCell><svg width="18" height="20" viewBox="0 0 18 20"><path d="M1 5l5-3 3 2 3-2 5 3-2 4-2-1v10H5V8L3 9z" fill="#b17ff0" /><circle cx="15" cy="3" r="2.500" fill="#f55" /></svg></ImeCell>
    <ImeCell><svg width="14" height="14" viewBox="0 0 14 14" fill="#1a6fe0"><rect width="6" height="6" rx="2" /><rect x="8" width="6" height="6" rx="2" /><rect y="8" width="6" height="6" rx="2" /><rect x="8" y="8" width="6" height="6" rx="2" /></svg></ImeCell>
  </div>
);

const CadWindow = () => (
  <div className="absolute left-[1147px] top-0 flex flex-col w-[768px] h-[979px] bg-white text-[12px] text-[#333]">
    <div className="flex w-[762px] flex-col flex-1 min-h-0">
      <div className="flex items-start justify-between h-[52px] pt-[2px] pl-[10px] pr-[6px] bg-gradient-to-b from-[#f5f3f0] to-[#e9e5e0] shrink-0">
        <div className="flex items-center gap-[18.5px]">
          {cadTools.map(([t, c, i]) => <CadTool key={t} label={t} color={c} icon={i} />)}
          <CadSep />
          {cadTools2.map(([t, c, i]) => <CadTool key={t} label={t} color={c} icon={i} />)}
          <CadSep />
          <CadTool
            label="图纸对比"
            color="#333"
            icon={<g fill="none" stroke="#c59a3e" strokeWidth="1.500"><rect x="11" y="3" width="13" height="15" /><rect x="4" y="10" width="13" height="15" fill="#f1e6c9" /></g>}
          />
          <CadSep />
          <CadTool
            label="编辑助手"
            color="#333"
            icon={<g><rect x="2" y="1" width="24" height="26" rx="5" fill="#1398e8" /><text x="11" y="12" fontSize="7" fill="#fff" textAnchor="middle" dominantBaseline="central">CAD</text><path d="M12 20l9-10 3 3-9 9z" fill="#fff" /></g>}
          />
          <CadSep />
        </div>
        <span className="mt-[14px] text-[14px] font-bold">»</span>
      </div>
      <div className="flex items-end justify-between h-[26px] pl-[2px] pr-[8px] bg-[#f0f0f0] shrink-0">
        <div className="flex items-end">
          <div className="flex items-center justify-between w-[158px] h-[23px] pl-[8px] pr-[6px] bg-[#f5f5f5] border border-b-0 border-[#b0b0b0] whitespace-nowrap">
            <span className="w-[126px] overflow-hidden">红罗沉浸式交流中心一···</span>
            <span className="text-[#888]">X</span>
          </div>
          <div className="flex items-center justify-between w-[158px] h-[25px] pl-[18px] pr-[6px] bg-gradient-to-b from-[#dbe7f4] to-[#c9dbef] border border-b-0 border-[#7a9cc6] text-[13px] font-bold whitespace-nowrap">
            红罗村结构图3.13
            <span className="text-[#888] font-normal">X</span>
          </div>
        </div>
        <span className="flex flex-col items-center mb-[7px] gap-[1px]">
          <span className="w-[12px] h-[2px] bg-black" />
          <svg width="12" height="9" viewBox="0 0 12 9"><polygon points="0,0 12,0 6,9" fill="#000" /></svg>
        </span>
      </div>
      <div className="relative h-[870px] bg-black shrink-0">
        <CadSheet />
        <div className="absolute left-[187px] top-[817px] flex items-center w-[387px] h-[37px] pl-[9px] bg-[#5f5f5f] border border-[#777] text-[#eee]">
          <svg width="18" height="24" viewBox="0 0 18 24" fill="none" stroke="#d5d5d5"><rect x="1" y="2" width="7" height="9" rx="3" /><rect x="10" y="2" width="7" height="9" rx="3" /><rect x="1" y="14" width="7" height="9" rx="3" /><rect x="10" y="14" width="7" height="9" rx="3" /></svg>
          <span className="w-px h-[18px] ml-[10px] mr-[3px] bg-[#7c7c7c]" />
          <span className="text-[13px] whitespace-nowrap">标注分类</span>
          <div className="flex items-center justify-between w-[149px] h-[28px] ml-[7px] pl-[6px] pr-[4px] border border-black whitespace-nowrap text-[13px]">
            <span className="flex items-center">
              <span className="w-[13px] h-[14px] mr-[4px] bg-[#e05300] border border-[#222]" />
              未分类
            </span>
            <Tri c="#eee" />
          </div>
          <svg className="ml-[14px]" width="20" height="20" viewBox="0 0 20 20" fill="none" stroke="#d5d5d5"><path d="M5 4H2v15h14v-3M5 1h13v15H5zM9 11l6-7" /></svg>
          <svg className="ml-[13px]" width="20" height="20" viewBox="0 0 20 20" fill="none" stroke="#d5d5d5"><path d="M10 1v18M1 10h18M7 4l3-3 3 3M7 16l3 3 3-3M4 7l-3 3 3 3M16 7l3 3-3 3" /></svg>
          <span className="ml-[9px] w-[10px] h-[16px] border border-[#d5d5d5] rounded-l-[2px]" />
        </div>
        <ImeBar />
        <div className="absolute left-[519px] top-[818px] flex items-center justify-center w-[32px] h-[29px] rotate-[-8deg] rounded-[4px] bg-[#f05a22] border-2 border-white text-white font-bold text-[24px] leading-none italic">S</div>
      </div>
      <div className="flex items-stretch h-[20px] bg-[#efefef] border-b-2 border-black box-content shrink-0">
        <div className="flex items-center justify-center w-[67px] bg-black text-white rounded-b-[5px] text-[13px]">模型</div>
        <div className="flex items-center justify-center w-[64px] bg-white text-black border-x border-b border-black rounded-b-[5px] text-[13px]">布局1</div>
      </div>
      <div className="flex flex-1 bg-[#ececec] overflow-hidden">
        <span className="ml-[135px] w-px bg-[#d0d0d0]" />
        <span className="ml-[61px] w-px bg-[#d0d0d0]" />
        <span className="ml-[450px] w-px bg-[#d0d0d0]" />
      </div>
    </div>
    <div className="absolute right-0 top-0 w-[6px] h-[642px] bg-[#e6e6e6]" />
  </div>
);

export default function App() {
  return (
    <div className="relative w-[1915px] h-[979px] overflow-hidden bg-white font-['Liberation_Sans','Noto_Sans_CJK_SC',sans-serif]">
      <LeftApp />
      <CadWindow />
    </div>
  );
}
